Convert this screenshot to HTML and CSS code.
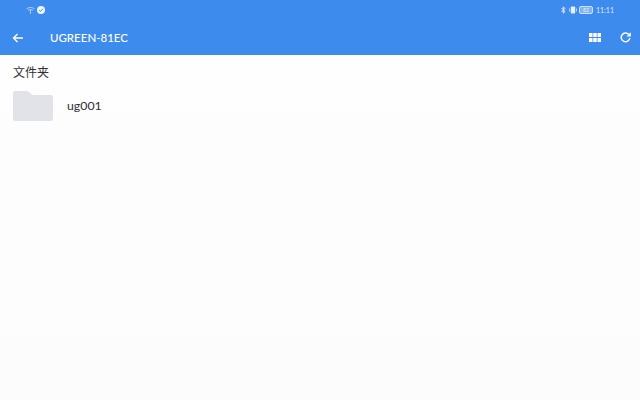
FILE: index.html
```html
<!DOCTYPE html>
<html lang="en">
<head>
    <meta charset="UTF-8">
    <title>UGREEN-81EC</title>
    <link rel="stylesheet" href="styles.css">
</head>
<body>
    <header class="header">
        <!-- status bar -->
        <div class="status">
            <div class="status-left">
                <svg class="wifi" width="9" height="7" viewBox="0 0 9 7">
                    <path d="M0.500 1.800 C3 0 6 0 8.500 1.800 M2 3.300 C3.500 2.300 5.500 2.300 7 3.300 M4.500 2.800 V6.800" fill="none" stroke="#b5d2f7" stroke-width="1"/>
                </svg>
                <svg class="check" width="8" height="8" viewBox="0 0 8 8">
                    <circle cx="4" cy="4" r="4" fill="#eef5fe"/>
                    <path d="M2.200 4.200 L3.500 5.400 L5.800 2.800" fill="none" stroke="#3d8bec" stroke-width="1"/>
                </svg>
            </div>
            <div class="status-right">
                <svg width="5" height="8" viewBox="0 0 5 8">
                    <path d="M0.500 2 L4 5.500 L2.300 7.200 V0.800 L4 2.500 L0.500 6" fill="none" stroke="#dbe9fc" stroke-width="1"/>
                </svg>
                <svg width="8" height="8" viewBox="0 0 8 8">
                    <rect x="1.800" y="0.500" width="4.400" height="7" rx="0.800" fill="#e6f0fd"/>
                    <path d="M0.500 2.500 V5.500 M7.500 2.500 V5.500" stroke="#dbe9fc" stroke-width="0.800"/>
                </svg>
                <div class="battery">
                    <span class="battery-text">82</span>
                </div>
                <span class="clock">11:11</span>
            </div>
        </div>
        <!-- toolbar -->
        <div class="toolbar">
            <svg class="back" width="12" height="10" viewBox="0 0 12 10">
                <path d="M11 5 H1.500 M5.500 1 L1.500 5 L5.500 9" fill="none" stroke="#fff" stroke-width="1.400"/>
            </svg>
            <span class="title">UGREEN-81EC</span>
            <svg class="grid-btn" width="12" height="9" viewBox="0 0 12 9">
                <path d="M0 0 H3.500 V4 H0 Z M4.250 0 H7.750 V4 H4.250 Z M8.500 0 H12 V4 H8.500 Z M0 5 H3.500 V9 H0 Z M4.250 5 H7.750 V9 H4.250 Z M8.500 5 H12 V9 H8.500 Z" fill="#fff"/>
            </svg>
            <svg class="refresh" width="11" height="11" viewBox="0 0 11 11">
                <path d="M8.800 2.600 A4.300 4.300 0 1 0 9.800 6" fill="none" stroke="#fff" stroke-width="1.500"/>
                <path d="M10.800 0.300 V4.600 H6.500 Z" fill="#fff"/>
            </svg>
        </div>
    </header>

    <main class="content">
        <h2 class="section-title">文件夹</h2>
        <div class="folder-row">
            <svg class="folder" width="40" height="30" viewBox="0 0 40 30">
                <path d="M2 0 H13 C15 0 16 1 17 2 C18 3 19 4 21 4 H38 C39 4 40 5 40 6 V28 C40 29 39 30 38 30 H2 C1 30 0 29 0 28 V2 C0 1 1 0 2 0 Z" fill="#e2e3e8"/>
            </svg>
            <span class="folder-name">ug001</span>
        </div>
    </main>
</body>
</html>
```

FILE: styles.css
```css
body {
    margin: 0;
    width: 640px;
    height: 400px;
    overflow: hidden;
    background: linear-gradient(to bottom, #fefefe, #fcfcfc);
    color: #303133;
    font-family: Lato, "Noto Sans CJK SC", sans-serif;
}

.header {
    height: 55px;
    background: #3d8bec;
    color: #fff;
}

/* status bar */
.status {
    height: 20px;
    display: flex;
    justify-content: space-between;
    align-items: center;
    padding: 0 26px;
}

.status-left,
.status-right {
    display: flex;
    align-items: center;
}

.status-left {
    gap: 2px;
}

.status-right {
    gap: 3px;
}

.battery {
    width: 12px;
    height: 6px;
    margin-left: -1px;
    border: 1px solid #cfe2fb;
    border-radius: 2px;
    background: rgba(255, 255, 255, 0.35);
    display: flex;
    align-items: center;
    justify-content: center;
}

.battery-text {
    font-size: 5px;
    color: #e6f0fd;
}

.clock {
    font-size: 7px;
    color: #dbe9fc;
}

/* toolbar */
.toolbar {
    height: 35px;
    display: flex;
    align-items: center;
    padding: 0 9px 0 12px;
}

.toolbar svg {
    flex: none;
}

.title {
    flex: 1;
    margin-left: 26px;
    font-size: 11.5px;
    font-weight: 500;
}

.refresh {
    margin-left: 19px;
}

/* content */
.content {
    padding: 10px 13px;
}

.section-title {
    margin: 0;
    font-size: 12px;
    font-weight: 400;
    line-height: 16px;
}

.folder-row {
    display: flex;
    align-items: center;
    margin-top: 10px;
}

.folder-name {
    margin-left: 14px;
    padding-bottom: 1px;
    font-size: 12.3px;
}
```
